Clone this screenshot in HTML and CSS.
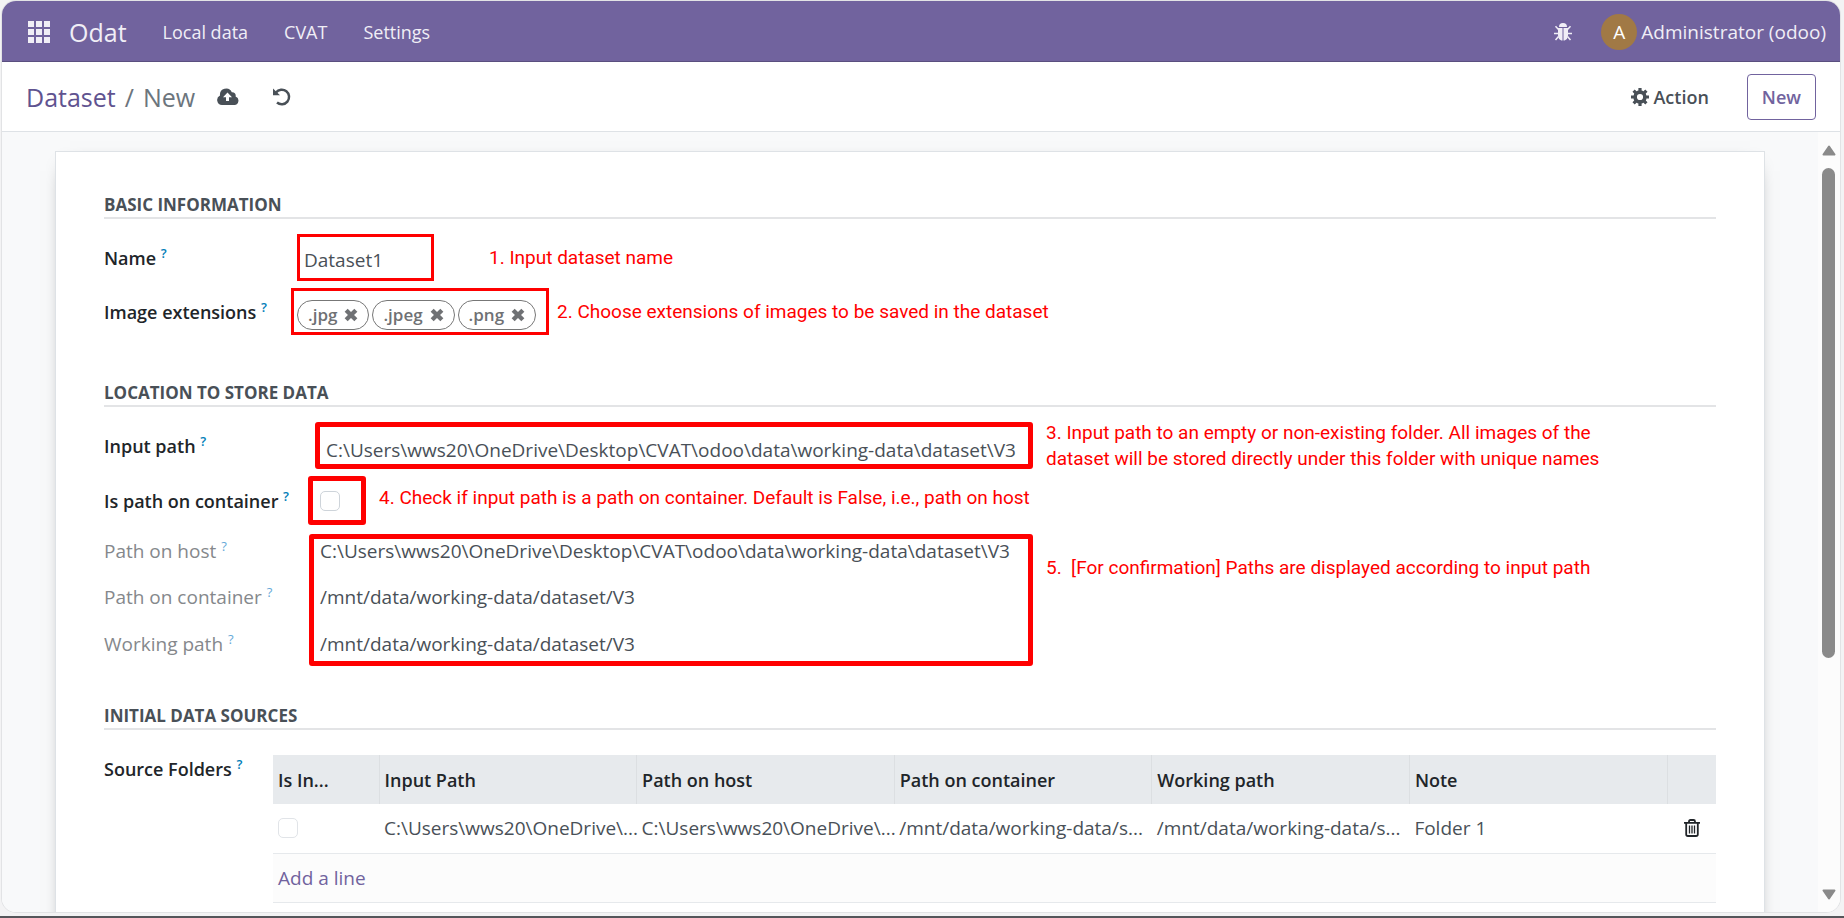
FILE: index.html
```html
<!DOCTYPE html>
<html lang="en">
<head>
<meta charset="utf-8">
<title>Odat - Dataset</title>
<link rel="stylesheet" href="styles.css">
</head>
<body>
<div class="app">
  <header class="navbar">
    <button class="icon-btn apps" aria-label="Apps">
      <svg width="22" height="22" viewBox="0 0 22 22" fill="currentColor"><path d="M0 0h6v6H0zM8 0h6v6H8zM16 0h6v6h-6zM0 8h6v6H0zM8 8h6v6H8zM16 8h6v6h-6zM0 16h6v6H0zM8 16h6v6H8zM16 16h6v6h-6z"/></svg>
    </button>
    <a class="brand" href="#">Odat</a>
    <nav class="menu">
      <a href="#">Local data</a>
      <a href="#">CVAT</a>
      <a href="#">Settings</a>
    </nav>
    <div class="systray">
      <button class="icon-btn bug" aria-label="Debug">
        <svg width="18" height="20" viewBox="0 0 18 20"><path d="M5 5a4 4 0 0 1 8 0z" fill="currentColor"/><path d="M4 6h4.500v12.500C5.500 18.500 4 16 4 13zM9.500 6H14v7c0 3-1.500 5.500-4.500 5.500z" fill="currentColor"/><path d="M4.500 7.500 1.500 4.300M13.500 7.500l3-3.200M0 11.500h4.500M18 11.500h-4.500M4.500 14.500l-3 3.500M13.500 14.500l3 3.500" stroke="currentColor" stroke-width="1.500"/></svg>
      </button>
      <button class="user"><span class="avatar">A</span>Administrator (odoo)</button>
    </div>
  </header>

  <div class="control">
    <div class="crumbs"><a href="#">Dataset</a><span>/</span><span>New</span></div>
    <button class="icon-btn save" aria-label="Save">
      <svg width="22" height="17" viewBox="0 0 22 17"><path d="M5 17a5 5 0 0 1-2-9.500A6.200 6.200 0 0 1 14.800 4.200 3.500 3.500 0 0 1 18.600 8.500 4.400 4.400 0 0 1 17.400 17z" fill="currentColor"/><path d="M10.500 4.500 15 9.200h-3V13H9V9.200H6z" fill="#fff"/></svg>
    </button>
    <button class="icon-btn discard" aria-label="Discard">
      <svg width="18" height="18" viewBox="0 0 18 18"><path d="M3 4.500A7.300 7.300 0 1 1 4 14.500" fill="none" stroke="currentColor" stroke-width="2.500"/><path d="M0 .5 7 7.300H0z" fill="currentColor"/></svg>
    </button>
    <button class="action">
      <svg width="18" height="18" viewBox="0 0 18 18"><circle cx="9" cy="9" r="4.900" fill="none" stroke="currentColor" stroke-width="3.600"/><path d="M9 0v3.500M9 14.500V18M0 9h3.500M14.500 9H18M2.600 2.600l2.500 2.500M12.900 12.900l2.500 2.500M2.600 15.400l2.500-2.500M12.900 5.100l2.500-2.500" stroke="currentColor" stroke-width="3.200"/></svg>
      Action
    </button>
    <button class="new">New</button>
  </div>

  <div class="body">
    <main class="content">
      <form class="sheet">
        <section class="group">
          <h2>Basic information</h2>
          <div class="row name-row">
            <label for="name">Name <sup>?</sup></label>
            <div class="mark name-mark"><input id="name" type="text" value="Dataset1"></div>
            <p class="note">1. Input dataset name</p>
          </div>
          <div class="row tags-row">
            <span class="label" id="ext-label">Image extensions <sup>?</sup></span>
            <div class="mark tags-mark" role="group" aria-labelledby="ext-label">
              <span class="tag">.jpg <button type="button" aria-label="Remove .jpg"><svg width="14" height="14" viewBox="0 0 13 13"><path d="M2 2l9 9M11 2l-9 9" stroke="currentColor" stroke-width="4"/></svg></button></span>
              <span class="tag">.jpeg <button type="button" aria-label="Remove .jpeg"><svg width="14" height="14" viewBox="0 0 13 13"><path d="M2 2l9 9M11 2l-9 9" stroke="currentColor" stroke-width="4"/></svg></button></span>
              <span class="tag">.png <button type="button" aria-label="Remove .png"><svg width="14" height="14" viewBox="0 0 13 13"><path d="M2 2l9 9M11 2l-9 9" stroke="currentColor" stroke-width="4"/></svg></button></span>
            </div>
            <p class="note">2. Choose extensions of images to be saved in the dataset</p>
          </div>
        </section>

        <section class="group location">
          <h2>Location to store data</h2>
          <div class="row path-row">
            <label for="path">Input path <sup>?</sup></label>
            <div class="mark thick path-mark"><input id="path" type="text" value="C:\Users\wws20\OneDrive\Desktop\CVAT\odoo\data\working-data\dataset\V3"></div>
            <p class="note">3. Input path to an empty or non-existing folder. All images of the<br>dataset will be stored directly under this folder with unique names</p>
          </div>
          <div class="row check-row">
            <label for="on-container">Is path on container <sup>?</sup></label>
            <div class="mark thick check-mark"><input id="on-container" type="checkbox"></div>
            <p class="note">4. Check if input path is a path on container. Default is False, i.e., path on host</p>
          </div>
          <div class="row result-row">
            <div class="result-labels">
              <span>Path on host <sup>?</sup></span>
              <span>Path on container <sup>?</sup></span>
              <span>Working path <sup>?</sup></span>
            </div>
            <div class="mark thick result-mark">
              <span>C:\Users\wws20\OneDrive\Desktop\CVAT\odoo\data\working-data\dataset\V3</span>
              <span>/mnt/data/working-data/dataset/V3</span>
              <span>/mnt/data/working-data/dataset/V3</span>
            </div>
            <p class="note">5. &nbsp;[For confirmation] Paths are displayed according to input path</p>
          </div>
        </section>

        <section class="group">
          <h2>Initial data sources</h2>
          <div class="sources">
            <span class="label">Source Folders <sup>?</sup></span>
            <table>
              <colgroup><col class="col-check"><col><col><col><col><col><col class="col-trash"></colgroup>
              <thead>
                <tr><th>Is In...</th><th>Input Path</th><th>Path on host</th><th>Path on container</th><th>Working path</th><th>Note</th><th></th></tr>
              </thead>
              <tbody>
                <tr>
                  <td><input type="checkbox" aria-label="Is input path on container"></td>
                  <td>C:\Users\wws20\OneDrive\...</td>
                  <td>C:\Users\wws20\OneDrive\...</td>
                  <td>/mnt/data/working-data/s...</td>
                  <td>/mnt/data/working-data/s...</td>
                  <td>Folder 1</td>
                  <td class="trash"><button type="button" class="icon-btn" aria-label="Delete row"><svg width="16" height="18" viewBox="0 0 16 18" fill="none" stroke="currentColor"><path d="M0 3.800h16M5 3.500V2.500Q5 1 6.500 1h3Q11 1 11 2.500v1M2.200 4v11.200q0 1.800 1.800 1.800h8q1.800 0 1.800-1.800V4" stroke-width="1.800"/><path d="M5.500 6.500v8M8 6.500v8M10.500 6.500v8" stroke-width="1.300"/></svg></button></td>
                </tr>
                <tr class="add"><td colspan="7"><a href="#">Add a line</a></td></tr>
              </tbody>
            </table>
          </div>
        </section>
      </form>
    </main>
    <div class="scrollbar" aria-hidden="true">
      <svg width="14" height="11" viewBox="0 0 14 11"><path d="M7 1.500 12.500 9.500h-11z" fill="#8a8a8a" stroke="#8a8a8a" stroke-width="2" stroke-linejoin="round"/></svg>
      <div class="track"><div class="thumb"></div></div>
      <svg width="14" height="11" viewBox="0 0 14 11"><path d="M7 9.500 12.500 1.500h-11z" fill="#8a8a8a" stroke="#8a8a8a" stroke-width="2" stroke-linejoin="round"/></svg>
    </div>
  </div>
</div>
</body>
</html>
```
FILE: styles.css
```css
* { box-sizing: border-box; }

body {
  margin: 0;
  height: 100vh;
  padding: 1px 4px 4px 2px;
  border-bottom: 2px solid #55565a;
  background: #f3f3f4;
  color: #495057;
  font: 19px/28px "Open Sans", "Noto Sans", sans-serif;
  overflow: hidden;
}

a { color: inherit; text-decoration: none; }
button { padding: 0; border: 0; background: none; color: inherit; font: inherit; cursor: pointer; }
input { font: inherit; color: inherit; }
.icon-btn { display: flex; align-items: center; }

.app {
  display: flex;
  flex-direction: column;
  height: 100%;
  border-radius: 14px;
  overflow: hidden;
  background: #fff;
  box-shadow: 0 0 0 1px #e2e3e5;
}

/* Top bar */
.navbar {
  display: flex;
  align-items: center;
  flex: 0 0 61px;
  padding: 1px 14px 0 26px;
  border-bottom: 1px solid #5a4f7f;
  background: #71639e;
  color: #f0eef6;
}
.brand { margin-left: 19px; font-size: 25px; }
.menu { display: flex; gap: 36px; margin-left: 36px; font-size: 18px; }
.systray { display: flex; align-items: center; gap: 29px; margin-left: auto; }
.user { display: flex; align-items: center; gap: 4px; }
.avatar {
  width: 36px;
  border-radius: 50%;
  background: #a17945;
  color: #fff;
  line-height: 36px;
  text-align: center;
}

/* Breadcrumb and actions */
.control {
  display: flex;
  align-items: center;
  flex: 0 0 70px;
  padding: 0 24px;
  border-bottom: 1px solid #dee2e6;
}
.crumbs { display: flex; gap: 9px; color: #6c757d; font-size: 25px; }
.crumbs a { color: #5f5390; }
.save { margin-left: 22px; }
.discard { margin-left: 34px; }
.action { display: flex; align-items: center; gap: 4px; margin-left: auto; font-size: 18px; font-weight: 600; }
.new {
  height: 46px;
  margin-left: 38px;
  padding: 0 14px;
  border: 1px solid #71639e;
  border-radius: 4px;
  color: #71639e;
  font-size: 18px;
  font-weight: 600;
}

/* Form area */
.body { display: flex; flex: 1; min-height: 0; background: #f8f9fa; }
.content { flex: 1; padding: 19px 53px 0; overflow: hidden; }
.sheet {
  min-height: 100%;
  padding: 40px 48px 48px;
  border: 1px solid #dee2e6;
  background: #fff;
  box-shadow: 0 5px 20px -15px #000;
}
.group { margin-bottom: 45px; }
.location { margin-bottom: 37px; }
h2 {
  margin: 0 0 15px;
  border-bottom: 2px solid #e3e4e6;
  font-size: 17px;
  font-weight: 700;
  line-height: 25px;
  text-transform: uppercase;
}

.row { display: grid; grid-template-rows: 47px; align-items: center; margin-bottom: 7px; }
.name-row { grid-template-columns: 193px 137px 1fr; }
.tags-row { grid-template-columns: 187px 258px 1fr; }
.path-row { grid-template-columns: 211px 718px 1fr; }
.check-row { grid-template: 49px / 204px 58px 1fr; margin-bottom: 9px; }
.result-row { grid-template: 132px / 205px 724px 1fr; }

label, .label { color: #212529; font-size: 18px; font-weight: 600; white-space: nowrap; }
sup { color: #017eb8; font-size: 13px; line-height: 1; vertical-align: 7px; }

.mark { height: 100%; border: 3px solid #f00; }
.thick { border-width: 5px; border-radius: 3px; }
.mark input[type="text"] { width: 100%; padding: 0; border: 0; outline: 0; background: none; }
.name-mark { padding: 10px 0 0 4px; }
.path-mark { padding: 10px 0 0 6px; }
.mark input[type="text"] { display: block; height: 26px; }
.tags-mark { display: flex; align-items: flex-start; gap: 3px; padding: 9px 0 0 3px; }
.check-mark { display: flex; align-items: center; padding-left: 7px; }
.result-mark { padding-left: 6px; }

.tag {
  display: flex;
  align-items: center;
  gap: 7px;
  height: 30px;
  padding: 0 10px;
  border: 1px solid #777;
  border-radius: 15px;
  color: #6f7174;
  font-size: 17px;
  font-weight: 600;
}
.tag button { display: flex; }

input[type="checkbox"] {
  appearance: none;
  display: block;
  width: 20px;
  height: 20px;
  margin: 0;
  border: 1px solid #ced4da;
  border-radius: 5px;
  background: #fff;
}

.result-labels, .result-mark { display: flex; flex-direction: column; }
.result-labels { align-self: start; padding-top: 5px; color: #85888c; }
.result-labels sup { color: #66a9d8; }
.result-labels span, .result-mark span { line-height: 47px; }
.result-labels span:first-child, .result-mark span:first-child { line-height: 24px; }
.result-labels span:nth-child(2), .result-mark span:nth-child(2) { margin-top: 11px; }

.note {
  margin: 0;
  padding-left: 13px;
  color: #f00;
  font: 19px/26px Roboto, "Liberation Sans", sans-serif;
  white-space: nowrap;
}
.name-row .note { padding-left: 55px; }
.tags-row .note { padding-left: 8px; }
.check-row .note { padding-bottom: 5px; }
.result-row .note { align-self: start; padding-top: 21px; }

/* Source folder list */
.sources { display: grid; grid-template-columns: 169px 1fr; padding-top: 10px; }
table { width: 100%; border-collapse: collapse; table-layout: fixed; }
.col-check { width: 106px; }
.col-trash { width: 49px; }
th, td { height: 49px; padding: 0 0 0 5px; text-align: left; white-space: nowrap; }
th { background: #e7eaed; color: #212529; font-size: 18px; font-weight: 600; }
th + th { border-left: 1px solid #dcdfe2; }
tbody tr { border-bottom: 1px solid #e6e9ec; }
tbody input[type="checkbox"] { border-color: #e1e4e8; }
.add { background: #fcfcfc; color: #71639e; }
.trash { padding-left: 17px; color: #212529; }

/* Scrollbar */
.scrollbar {
  display: flex;
  flex-direction: column;
  align-items: center;
  flex: 0 0 22px;
  padding: 13px 1px 12px 0;
  background: #fcfcfc;
}
.track { flex: 1; padding-top: 12px; }
.thumb { width: 13px; height: 68%; border-radius: 7px; background: #8a8a8a; }
```
